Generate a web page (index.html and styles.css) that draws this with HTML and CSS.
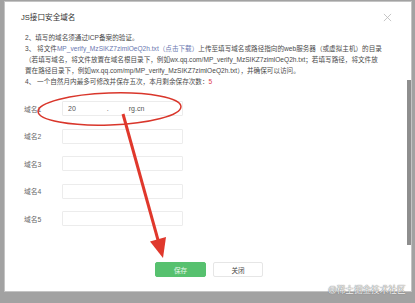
FILE: index.html
```html
<!doctype html>
<html>
<head>
	<meta charset="utf-8">
	<title>JS接口安全域名</title>
	<link rel="stylesheet" href="styles.css">
</head>
<body>
	<div class="page">
		<div class="dialog">
			<div class="dialog-head">
				<span class="dialog-title">JS接口安全域名</span>
				<svg class="close" viewBox="0 0 10 10"><path d="M1 1L9 9M9 1L1 9"></path></svg>
			</div>

			<div class="notes">
				<p>2、填写的域名须通过ICP备案的验证。</p>
				<p>3、 将文件<a href="#">MP_verify_MzSIKZ7zimlOeQ2h.txt（点击下载）</a>上传至填写域名或路径指向的web服务器（或虚拟主机）的目录</p>
				<p>（若填写域名，将文件放置在域名根目录下，例如wx.qq.com/MP_verify_MzSIKZ7zimlOeQ2h.txt；若填写路径，将文件放</p>
				<p>置在路径目录下，例如wx.qq.com/mp/MP_verify_MzSIKZ7zimlOeQ2h.txt），并确保可以访问。</p>
				<p>4、 一个自然月内最多可修改并保存五次，本月剩余保存次数：<span class="count">5</span></p>
			</div>

			<form class="domains">
				<div class="row"><label>域名1</label><div class="input">20<span class="gap1"></span>.<span class="gap2"></span>rg.cn</div></div>
				<div class="row"><label>域名2</label><div class="input"></div></div>
				<div class="row"><label>域名3</label><div class="input"></div></div>
				<div class="row"><label>域名4</label><div class="input"></div></div>
				<div class="row"><label>域名5</label><div class="input"></div></div>
			</form>

			<div class="actions">
				<button type="button" class="btn btn-primary">保存</button>
				<button type="button" class="btn">关闭</button>
			</div>

			<div class="scroll-thumb"></div>
		</div>
	</div>

	<!-- red annotation drawn over the screenshot -->
	<svg class="marks" viewBox="0 0 415 303">
		<ellipse cx="109.5" cy="109" rx="71.5" ry="16" transform="rotate(-2 109.5 109)"></ellipse>
		<line x1="123" y1="114" x2="158" y2="240"></line>
		<polygon points="163,258 150,241.5 166,237"></polygon>
	</svg>

	<div class="watermark">@稀土掘金技术社区</div>
</body>
</html>
```

FILE: styles.css
```css
body {
	margin: 0;
	background: #a2a2a2;
	font-family: "Liberation Sans", "Noto Sans CJK SC", sans-serif;
	color: #3a3a3a;
}

.page {
	padding: 2px 4px 0 5px;
	height: 303px;
	box-sizing: border-box;
}

.dialog {
	position: relative;
	background: #fff;
	height: 289px;
	box-shadow: 0 0 0 1px #c4c4c4;
}

.dialog-head {
	display: flex;
	justify-content: space-between;
	align-items: flex-start;
	height: 30px;
	padding: 10px 19px 0 16px;
	box-sizing: border-box;
}

.dialog-title {
	font-size: 7.6px;
	line-height: 12px;
	color: #333;
}

.close {
	width: 9px;
	height: 9px;
	margin-top: 1px;
}

.close path {
	stroke: #b8b8b8;
	stroke-width: 0.9;
	fill: none;
}

.notes {
	padding-left: 20px;
	font-size: 6.6px;
	line-height: 11px;
	color: #4a4a4a;
}

.notes p {
	margin: 0;
	white-space: nowrap;
}

.notes a {
	color: #6a78b0;
	text-decoration: none;
}

.count {
	color: #e0404a;
}

.domains {
	display: flex;
	flex-direction: column;
	gap: 12.5px;
	margin: 14px 0 0 19px;
}

.row {
	display: flex;
	align-items: center;
	height: 15px;
}

.row label {
	width: 38px;
	font-size: 6.8px;
	color: #666;
}

.input {
	width: 121px;
	height: 15px;
	box-sizing: border-box;
	border: 1px solid #ececec;
	border-radius: 1px;
	padding-left: 5px;
	font-size: 7px;
	line-height: 13px;
	color: #555;
}

.gap1 {
	display: inline-block;
	width: 31px;
}

.gap2 {
	display: inline-block;
	width: 20px;
}

.actions {
	display: flex;
	justify-content: center;
	gap: 7px;
	margin-top: 36px;
	padding-left: 2px;
}

.btn {
	width: 50px;
	height: 15px;
	padding: 0;
	border: 1px solid #e6e6e6;
	border-radius: 2px;
	background: #fff;
	font-family: "Liberation Sans", "Noto Sans CJK SC", sans-serif;
	font-size: 6.6px;
	color: #444;
}

.btn-primary {
	width: 51px;
	background: #57c16f;
	border-color: #57c16f;
	color: #e8f7ec;
}

.scroll-thumb {
	position: absolute;
	right: 0;
	top: 78px;
	width: 4px;
	height: 165px;
	background: #8e8e8e;
}

.marks {
	position: absolute;
	top: 0;
	left: 0;
	width: 415px;
	height: 303px;
	pointer-events: none;
}

.marks ellipse {
	fill: none;
	stroke: #d9362b;
	stroke-width: 1.5;
}

.marks line {
	stroke: #e0382c;
	stroke-width: 3;
}

.marks polygon {
	fill: #e0382c;
}

.watermark {
	position: absolute;
	left: 328px;
	top: 284px;
	font-size: 8.6px;
	line-height: 12px;
	color: #f4f4f4;
	text-shadow: 0 0 1px #777, 0 0 1px #777;
}
```
